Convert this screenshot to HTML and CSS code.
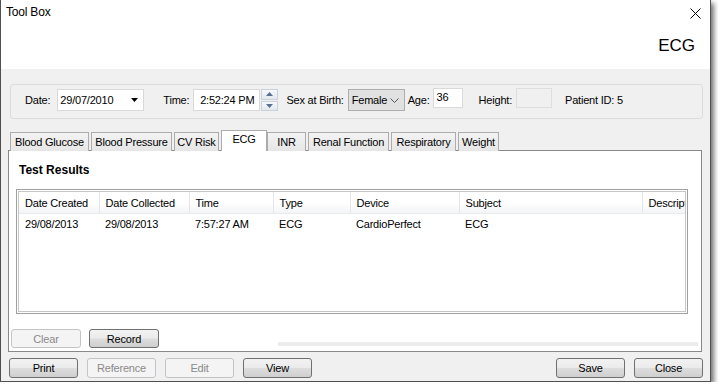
FILE: index.html
```html
<!DOCTYPE html>
<html lang="en">
<head>
    <meta charset="UTF-8">
    <title>Tool Box</title>
    <link rel="stylesheet" href="styles.css">
</head>
<body>
    <div class="window">
        <div class="titlebar">
            <span class="title">Tool Box</span>
            <svg class="close-x" width="11" height="11" viewBox="0 0 11 11">
                <path d="M0.5 0.5 L10.5 10.5 M10.5 0.5 L0.5 10.5" stroke="#000" stroke-width="1" fill="none"/>
            </svg>
        </div>
        <div class="banner">ECG</div>

        <div class="body">
            <!-- patient details -->
            <div class="groupbox">
                <span class="lbl lbl-date">Date:</span>
                <div class="field date-field">
                    <span>29/07/2010</span>
                    <svg class="drop" width="7" height="4" viewBox="0 0 7 4"><path d="M0 0 H7 L3.5 4 Z" fill="#000"/></svg>
                </div>
                <span class="lbl lbl-time">Time:</span>
                <div class="field time-field">2:52:24 PM</div>
                <div class="spinner">
                    <div class="spin"><svg width="7" height="4" viewBox="0 0 7 4"><path d="M0 4 H7 L3.5 0 Z" fill="#5a6f8e"/></svg></div>
                    <div class="spin"><svg width="7" height="4" viewBox="0 0 7 4"><path d="M0 0 H7 L3.5 4 Z" fill="#5a6f8e"/></svg></div>
                </div>
                <span class="lbl lbl-sex">Sex at Birth:</span>
                <div class="select">
                    <span>Female</span>
                    <svg width="9" height="5" viewBox="0 0 9 5"><path d="M0.5 0.5 L4.5 4.5 L8.5 0.5" stroke="#555" stroke-width="1" fill="none"/></svg>
                </div>
                <span class="lbl lbl-age">Age:</span>
                <div class="field small-field age-field">36</div>
                <span class="lbl lbl-height">Height:</span>
                <div class="field small-field height-field"></div>
                <span class="lbl lbl-pid">Patient ID: 5</span>
            </div>

            <!-- tabs -->
            <div class="tabs">
                <div class="tab t-glucose">Blood Glucose</div>
                <div class="tab t-pressure">Blood Pressure</div>
                <div class="tab t-cv">CV Risk</div>
                <div class="tab t-ecg active">ECG</div>
                <div class="tab t-inr">INR</div>
                <div class="tab t-renal">Renal Function</div>
                <div class="tab t-resp">Respiratory</div>
                <div class="tab t-weight">Weight</div>
            </div>

            <div class="panel">
                <div class="section-title">Test Results</div>
                <div class="list">
                    <div class="list-inner">
                        <table>
                            <colgroup>
                                <col class="c1"><col class="c2"><col class="c3"><col class="c4">
                                <col class="c5"><col class="c6"><col class="c7">
                            </colgroup>
                            <thead>
                                <tr>
                                    <th>Date Created</th>
                                    <th>Date Collected</th>
                                    <th>Time</th>
                                    <th>Type</th>
                                    <th>Device</th>
                                    <th>Subject</th>
                                    <th>Description</th>
                                </tr>
                            </thead>
                            <tbody>
                                <tr>
                                    <td>29/08/2013</td>
                                    <td>29/08/2013</td>
                                    <td>7:57:27 AM</td>
                                    <td>ECG</td>
                                    <td>CardioPerfect</td>
                                    <td>ECG</td>
                                    <td></td>
                                </tr>
                            </tbody>
                        </table>
                    </div>
                </div>
                <div class="panel-actions">
                    <button class="btn btn-wide" disabled>Clear</button>
                    <button class="btn btn-wide">Record</button>
                    <div class="strip"></div>
                </div>
            </div>

            <div class="footer">
                <button class="btn">Print</button>
                <button class="btn" disabled>Reference</button>
                <button class="btn" disabled>Edit</button>
                <button class="btn">View</button>
                <div class="spacer"></div>
                <button class="btn">Save</button>
                <button class="btn btn-last">Close</button>
            </div>
        </div>
    </div>
</body>
</html>
```

FILE: styles.css
```css
body {
    margin: 0;
    background: #ffffff;
    font-family: "Liberation Sans", Arial, sans-serif;
    font-size: 11px;
    letter-spacing: -0.2px;
    color: #000;
}

.window {
    width: 709px;
    background: #fff;
    border: 1px solid #505050;
    border-top: none;
    box-shadow: 3px 3px 5px rgba(0, 0, 0, 0.55);
}

.titlebar {
    height: 24px;
    display: flex;
    align-items: center;
    padding: 0 9px 0 5px;
}
.title {
    font-size: 12px;
    flex: 1;
}
.close-x {
    margin-top: 2px;
}

.banner {
    height: 43px;
    padding: 0 15px 2px 0;
    display: flex;
    align-items: center;
    justify-content: flex-end;
    font-size: 17px;
    letter-spacing: 0;
}

.body {
    background: #f0f0f0;
    padding: 15px 8px 3px 7px;
}

/* group box with patient details */
.groupbox {
    height: 33px;
    margin: 0 -1px 0 2px;
    border: 1px solid #dcdcdc;
    border-radius: 3px;
    display: flex;
    align-items: flex-start;
    padding-left: 14px;
}
.lbl {
    line-height: 22px;
    margin-top: 4px;
    white-space: nowrap;
}
.field {
    background: #fff;
    border: 1px solid #d9d9d9;
    box-sizing: border-box;
    height: 22px;
    margin-top: 4px;
    display: flex;
    align-items: center;
}
.date-field {
    width: 87px;
    margin-left: 7px;
    padding: 0 5px 0 2px;
    justify-content: space-between;
}
.lbl-time { margin-left: 19px; }
.time-field {
    width: 67px;
    margin-left: 4px;
    justify-content: flex-end;
    padding-right: 5px;
}
.spinner {
    width: 17px;
    height: 22px;
    margin: 4px 0 0 1px;
    display: flex;
    flex-direction: column;
    gap: 1px;
}
.spin {
    flex: 1;
    border: 1px solid #c9d1da;
    background: linear-gradient(#f6f8fa, #e3e8ee);
    display: flex;
    align-items: center;
    justify-content: center;
}
.lbl-sex { margin-left: 8px; }
.select {
    width: 57px;
    height: 22px;
    box-sizing: border-box;
    margin: 4px 0 0 4px;
    background: #e1e1e1;
    border: 1px solid #adadad;
    display: flex;
    align-items: center;
    justify-content: space-between;
    padding: 0 5px 0 3px;
}
.lbl-age { margin-left: 3px; }
.small-field {
    height: 20px;
    margin-top: 3px;
    align-items: flex-start;
    padding: 2px 3px;
}
.age-field {
    width: 30px;
    margin-left: 3px;
}
.lbl-height { margin-left: 16px; }
.height-field {
    width: 36px;
    margin-left: 4px;
    background: #f0f0f0;
    border-color: #dedede;
}
.lbl-pid { margin-left: 13px; }

/* tab strip */
.tabs {
    height: 21px;
    margin: 11px 0 -1px 2px;
    display: flex;
    align-items: flex-end;
    gap: 2px;
    position: relative;
    z-index: 1;
}
.tab {
    height: 19px;
    box-sizing: border-box;
    border: 1px solid #acacac;
    border-bottom: none;
    background: linear-gradient(#f3f3f3, #e6e6e6);
    display: flex;
    align-items: center;
    justify-content: center;
    white-space: nowrap;
}
.tab.active {
    height: 21px;
    background: #fff;
    align-items: flex-start;
    padding-top: 2px;
    margin-right: -2px;
}
.t-glucose { width: 79px; }
.t-pressure { width: 81px; }
.t-cv { width: 45px; }
.t-ecg { width: 46px; }
.t-inr { width: 39px; }
.t-renal { width: 81px; }
.t-resp { width: 65px; }
.t-weight { width: 41px; }

/* tab page */
.panel {
    background: #fff;
    border: 1px solid #898989;
    padding: 11px 0 3px 7px;
}
.section-title {
    font-size: 12px;
    font-weight: bold;
    line-height: 16px;
    margin: 0 0 11px 3px;
    letter-spacing: 0;
}
.list {
    width: 672px;
    height: 125px;
    box-sizing: border-box;
    border: 1px solid #a0a0a0;
    padding: 1px;
}
.list-inner {
    height: 100%;
    box-sizing: border-box;
    border: 1px solid #c6c6c6;
    overflow: hidden;
}
table {
    table-layout: fixed;
    border-collapse: collapse;
    width: 710px;
}
.c1 { width: 80px; }
.c2 { width: 90px; }
.c3 { width: 84px; }
.c4 { width: 77px; }
.c5 { width: 109px; }
.c6 { width: 183px; }
.c7 { width: 87px; }
th, td {
    text-align: left;
    font-weight: normal;
    padding: 0 0 0 6px;
    white-space: nowrap;
    overflow: hidden;
}
th {
    height: 21px;
    background: linear-gradient(#ffffff 50%, #f3f4f6);
    border-right: 1px solid #e3e5e8;
    border-bottom: 1px solid #eaeaea;
}
td {
    height: 20px;
}

.panel-actions {
    margin-top: 15px;
    height: 19px;
    display: flex;
    align-items: flex-end;
    gap: 8px;
    margin-left: -5px;
}
.strip {
    flex: 1;
    height: 4px;
    background: #ececec;
    margin: 0 3px 2px 111px;
}

/* buttons */
.btn {
    width: 69px;
    height: 20px;
    padding: 0;
    font-family: inherit;
    font-size: 11px;
    letter-spacing: -0.2px;
    color: #000;
    border: 1px solid #707070;
    border-radius: 3px;
    background: linear-gradient(#f2f2f2 0%, #ebebeb 48%, #dddddd 52%, #cfcfcf 100%);
}
.btn:disabled {
    color: #8a8a8a;
    border-color: #c2c4c6;
    background: #f4f4f4;
}
.btn-wide {
    width: 70px;
    height: 19px;
}

.footer {
    margin: 6px -1px 0 1px;
    display: flex;
    gap: 9px;
}
.spacer {
    flex: 1;
}
```
